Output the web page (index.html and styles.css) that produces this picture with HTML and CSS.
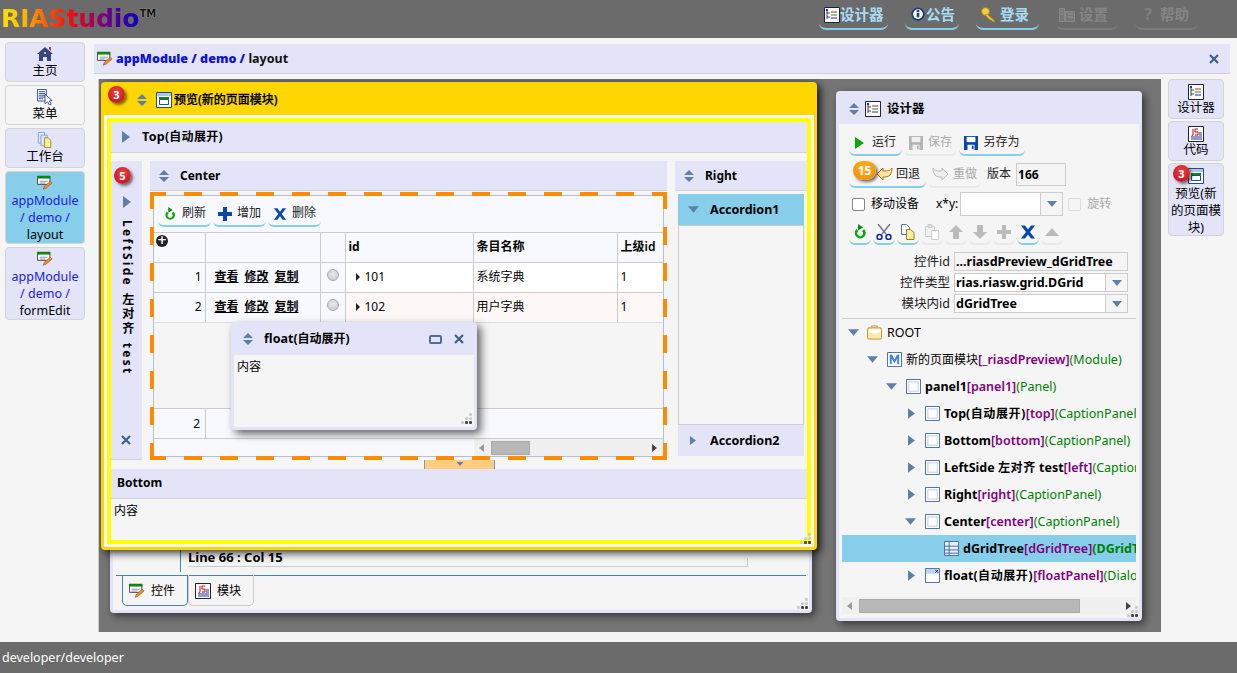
FILE: index.html
```html
<!DOCTYPE html>
<html lang="zh">
<head>
<meta charset="utf-8">
<title>RIAStudio</title>
<link rel="stylesheet" href="styles.css">
</head>
<body>
<svg class="defs" width="0" height="0">
  <defs>
    <symbol id="i-updown" viewBox="0 0 10 12"><path d="M5 0l5 5H0zM5 12L0 7h10z" fill="#5d80a6"/></symbol>
    <symbol id="i-right" viewBox="0 0 8 12"><path d="M0 0l8 6-8 6z" fill="#5d80a6"/></symbol>
    <symbol id="i-down" viewBox="0 0 12 7"><path d="M0 0h12L6 7z" fill="#5d80a6"/></symbol>
    <symbol id="i-close" viewBox="0 0 10 10"><path d="M1 1l8 8M9 1l-8 8" stroke="#3f5f84" stroke-width="2.2" fill="none"/></symbol>
    <symbol id="i-edit" viewBox="0 0 18 16"><path d="M.5.5h14v9H.5z" fill="#fff" stroke="#334"/><path d="M0 0h15v3H0z" fill="#0a8a0a"/><path d="M3 6h9M3 8h6" stroke="#889"/><path d="M7 15l1-3 7-6 2 2-7 6z" fill="#e89020" stroke="#a33" stroke-width=".6"/></symbol>
    <symbol id="i-tree" viewBox="0 0 16 16"><path d="M.5.5h15v15H.5z" fill="#fff" stroke="#223"/><path d="M3 3v9M3 6h3M3 10h3" stroke="#345" fill="none"/><path d="M7 5h6" stroke="#c22"/><path d="M7 8h6" stroke="#282"/><path d="M7 11h6" stroke="#22c"/><path d="M2 2h2v2H2z" fill="#22c"/></symbol>
    <symbol id="i-js" viewBox="0 0 16 16"><path d="M.5.5h15v15H.5z" fill="#fff" stroke="#223"/><path d="M5 3v6l-1.500 1M7 3h3v0M7 3v3h3v3H7" stroke="#d00" fill="none"/><path d="M11 7h3M11 9h3M3 11h11M3 13h11" stroke="#23a"/></symbol>
    <symbol id="i-window" viewBox="0 0 16 16"><path d="M.5.500h15v15H.5z" fill="#fff" stroke="#1c4f8f"/><path d="M1 1h14v3H1z" fill="#a9c7ea"/><path d="M3 5h10v2H3z" fill="#0a8a0a"/><path d="M3.500 7.500h9v5h-9z" fill="#fff" stroke="#1c4f8f"/></symbol>
    <symbol id="i-box" viewBox="0 0 16 16"><path d="M.5.500h15v15H.5z" fill="#fff" stroke="#3e6a9c"/><path d="M3 3h10v10H3z" fill="#fff" stroke="#c6c6e8"/></symbol>
    <symbol id="i-home" viewBox="0 0 16 16"><path d="M8 1L0 8h2v7h4v-4h4v4h4V8h2z" fill="#39457d"/><path d="M12 1h2v4l-2-2z" fill="#a33"/><path d="M7 6h2v2H7z" fill="#b8c0e0"/></symbol>
    <symbol id="i-menu" viewBox="0 0 18 18"><path d="M.5.500h10v13H.5z" fill="#fff" stroke="#24408f"/><path d="M2 3h7M2 5h7M2 7h7M2 9h7M2 11h5" stroke="#24408f"/><path d="M9 6l8 7-3 .5 2 3.500-2 1-2-3.500-3 2z" fill="#fff" stroke="#24408f"/></symbol>
    <symbol id="i-copy" viewBox="0 0 16 18"><path d="M.5.500h7v12h-7z" fill="#dfe8ff" stroke="#7d9bd0"/><path d="M3.500 3.500h7v12h-7z" fill="#dfe8ff" stroke="#7d9bd0"/><path d="M7.500 6.500h4l3 3v8h-7z" fill="#ffee9a" stroke="#a08030"/></symbol>
    <symbol id="i-info" viewBox="0 0 16 18"><circle cx="8" cy="8" r="7.500" fill="#1e3f7a"/><path d="M6 13l2 4 2-4z" fill="#1e3f7a"/><circle cx="8" cy="8" r="5.500" fill="#fff"/><path d="M6.500 3.500h3v2h-3zM6.500 6.500h3v5h-3z" fill="#1e3f7a"/></symbol>
    <symbol id="i-key" viewBox="0 0 16 16"><circle cx="4.500" cy="4.500" r="4" fill="#f0d040" stroke="#a08020"/><path d="M6 7l8 7-1 1-2-1-1-1-1 0-5-5z" fill="#e8c030" stroke="#a08020" stroke-width=".7"/></symbol>
    <symbol id="i-gear" viewBox="0 0 16 14"><path d="M.5.500h5v13h-5zM6.500 3.500h9v10h-9z" fill="#777" stroke="#888"/><path d="M2 3h2M2 6h2M9 6h5M9 9h5" stroke="#999"/></symbol>
    <symbol id="i-play" viewBox="0 0 9 12"><path d="M0 0l9 6-9 6z" fill="#0aa80a"/></symbol>
    <symbol id="i-save" viewBox="0 0 16 16"><path d="M0 0h16v16H0z" fill="#0a48a8"/><path d="M3 1h10v6H3z" fill="#fff"/><path d="M4 10h8v6H4z" fill="#fff"/><path d="M9 11h2v4H9z" fill="#0a48a8"/></symbol>
    <symbol id="i-save-off" viewBox="0 0 16 16"><path d="M0 0h16v16H0z" fill="#b4b4b4"/><path d="M3 1h10v6H3z" fill="#f0f0f0"/><path d="M4 10h8v6H4z" fill="#f0f0f0"/><path d="M9 11h2v4H9z" fill="#b4b4b4"/></symbol>
    <symbol id="i-undo" viewBox="0 0 16 16"><path d="M6 2L0 8l6 6v-3c3 0 5 0 7-2 2-3 2-5 2-7-2 3-4 3-9 3z" fill="#ffe6a0" stroke="#b07820"/></symbol>
    <symbol id="i-redo" viewBox="0 0 16 16"><path d="M10 2l6 6-6 6v-3c-3 0-5 0-7-2C1 6 1 4 1 2c2 3 4 3 9 3z" fill="#eee" stroke="#bbb"/></symbol>
    <symbol id="i-refresh" viewBox="0 0 14 16"><path d="M3.500 5a5.500 5.500 0 1 0 7.500 0l-2 2.300a2.800 2.800 0 1 1-3.700 0z" fill="#0aa80a"/><path d="M5 0v6.500l5-3z" fill="#0a8a0a"/></symbol>
    <symbol id="i-plus" viewBox="0 0 14 14"><path d="M5 0h4v5h5v4H9v5H5V9H0V5h5z" fill="#0a48a8"/></symbol>
    <symbol id="i-plus-off" viewBox="0 0 14 14"><path d="M5 0h4v5h5v4H9v5H5V9H0V5h5z" fill="#bbb"/></symbol>
    <symbol id="i-x" viewBox="0 0 16 13"><path d="M1 0h4l3 4 3-4h4l-5 6.500 5 6.500h-4L8 9l-3 4H1l5-6.500z" fill="#0a48a8"/></symbol>
    <symbol id="i-cut" viewBox="0 0 16 16"><path d="M2 0l8 10M14 0L6 10" stroke="#778" stroke-width="1.500"/><circle cx="3.500" cy="13" r="2.500" fill="none" stroke="#0a2a9a" stroke-width="1.500"/><circle cx="12.500" cy="13" r="2.500" fill="none" stroke="#0a2a9a" stroke-width="1.500"/></symbol>
    <symbol id="i-doc" viewBox="0 0 14 16"><path d="M.5.500h5l3 3v7h-8z" fill="#fff" stroke="#47c"/><path d="M5.500 5.500h4l3.500 3v7H5.500z" fill="#ffee9a" stroke="#a08030"/></symbol>
    <symbol id="i-paste" viewBox="0 0 14 16"><path d="M.5 2.500h9v10h-9z" fill="#f0f0f0" stroke="#ccc"/><path d="M3 .5h4v3H3z" fill="#ddd" stroke="#ccc"/><path d="M6.500 6.500h7v9h-7z" fill="#fff" stroke="#ccc"/></symbol>
    <symbol id="i-up" viewBox="0 0 14 14"><path d="M7 0l7 7H10v7H4V7H0z" fill="#bbb"/></symbol>
    <symbol id="i-dn" viewBox="0 0 14 14"><path d="M7 14l7-7H10V0H4v7H0z" fill="#bbb"/></symbol>
    <symbol id="i-tri" viewBox="0 0 14 8"><path d="M7 0l7 8H0z" fill="#bbb"/></symbol>
    <symbol id="i-folder" viewBox="0 0 16 15"><path d="M5 2V.5h6V2" fill="none" stroke="#c09030"/><rect x=".5" y="2.500" width="15" height="12" rx="1.500" fill="#ffe8a8" stroke="#c09030"/><path d="M2 7l6 2 6-2v-3H2z" fill="#fff"/></symbol>
    <symbol id="i-m" viewBox="0 0 16 16"><path d="M.5.500h15v15H.5z" fill="#fff" stroke="#3e6a9c"/><path d="M3 13V3h2.500L8 8l2.500-5H13v10h-2V7L8 12 5 7v6z" fill="#3f7ff0"/></symbol>
    <symbol id="i-grid" viewBox="0 0 16 16"><path d="M.5.500h15v15H.5z" fill="#eef" stroke="#3e6a9c"/><path d="M1 5.500h14M1 9.500h14M1 13h14M5.500 1v14" stroke="#3e6a9c"/></symbol>
    <symbol id="i-dialog" viewBox="0 0 16 16"><path d="M.5.500h15v15H.5z" fill="#fff" stroke="#3e6a9c"/><path d="M1 1h14v5H1z" fill="#bcd3ee"/><path d="M11 2l3 3M14 2l-3 3" stroke="#224"/></symbol>
    <symbol id="i-grip" viewBox="0 0 12 12"><g fill="#ccc"><rect x="8" y="0" width="3" height="3" rx="1"/><rect x="4" y="4" width="3" height="3" rx="1"/><rect x="8" y="4" width="3" height="3" rx="1"/><rect x="0" y="8" width="3" height="3" rx="1"/></g><g fill="#444"><rect x="4" y="8" width="3" height="3" rx="1"/><rect x="8" y="8" width="3" height="3" rx="1"/></g></symbol>
  </defs>
</svg>

<div class="app">
  <header class="hdr">
    <div class="logo"><span class="logo-text">RIAStudio</span><span class="tm">TM</span></div>
    <nav class="hnav">
      <a class="hbtn w69"><svg class="i16"><use href="#i-tree"/></svg>设计器</a>
      <a class="hbtn w54"><svg class="i16"><use href="#i-info"/></svg>公告</a>
      <a class="hbtn w63 wide"><svg class="i16"><use href="#i-key"/></svg>登录</a>
      <a class="hbtn w62 off"><svg class="i16"><use href="#i-gear"/></svg>设置</a>
      <a class="hbtn w63 off"><span class="qm">?</span>帮助</a>
    </nav>
  </header>

  <div class="mid">
    <aside class="lnav">
      <a class="nbtn h40"><svg class="i16"><use href="#i-home"/></svg><span>主页</span></a>
      <a class="nbtn h40 plain"><svg class="i16"><use href="#i-menu"/></svg><span>菜单</span></a>
      <a class="nbtn h40"><svg class="i16"><use href="#i-copy"/></svg><span>工作台</span></a>
      <a class="nbtn active"><svg class="i16"><use href="#i-edit"/></svg><span class="path"><b>appModule / demo /</b> layout</span></a>
      <a class="nbtn"><svg class="i16"><use href="#i-edit"/></svg><span class="path"><b>appModule / demo /</b> formEdit</span></a>
    </aside>

    <main class="main">
      <div class="crumb">
        <svg class="i16"><use href="#i-edit"/></svg>
        <span class="crumb-text"><b>appModule / demo /</b> layout</span>
        <svg class="i10 crumb-x"><use href="#i-close"/></svg>
      </div>
      <div class="work-row">
        <section class="desktop">
          <div class="win back">
            <div class="editor"><div class="status">Line 66 : Col 15</div></div>
            <div class="tabs">
              <a class="tab on"><svg class="i16"><use href="#i-edit"/></svg>控件</a>
              <a class="tab"><svg class="i16"><use href="#i-js"/></svg>模块</a>
            </div>
            <svg class="grip"><use href="#i-grip"/></svg>
          </div>

          <div class="preview">
            <div class="ptitle">
              <span class="badge red">3</span>
              <svg class="updown"><use href="#i-updown"/></svg>
              <svg class="i16 pw"><use href="#i-window"/></svg>
              <span class="pt">预览(新的页面模块)</span>
            </div>
            <div class="pwhite"><div class="pbody">
              <div class="phead"><svg class="tri-r"><use href="#i-right"/></svg><b class="top">Top<i class="z">(自动展开)</i></b></div>
              <div class="layout">
                <div class="lside">
                  <span class="badge red b5">5</span>
                  <svg class="tri-r"><use href="#i-right"/></svg>
                  <div class="vtext">LeftSide 左对齐 test</div>
                  <svg class="i10 lside-x"><use href="#i-close"/></svg>
                </div>
                <div class="center">
                  <div class="phead"><svg class="updown"><use href="#i-updown"/></svg><b class="gap">Center</b></div>
                  <div class="gridwrap">
                    <div class="gridbox">
                      <div class="gbar">
                        <a class="tb w53"><svg class="i14"><use href="#i-refresh"/></svg>刷新</a>
                        <a class="tb w53"><svg class="i14"><use href="#i-plus"/></svg>增加</a>
                        <a class="tb w53"><svg class="i14"><use href="#i-x"/></svg>删除</a>
                      </div>
                      <table class="tbl">
                        <colgroup><col class="c1"><col class="c2"><col class="c3"><col class="c4"><col class="c5"><col class="c6"></colgroup>
                        <thead><tr>
                          <th class="plus-cell"><span class="plus">+</span></th><th></th><th></th><th>id</th><th>条目名称</th><th>上级id</th>
                        </tr></thead>
                        <tbody>
                          <tr><td class="num">1</td><td class="ops"><u>查看</u><u>修改</u><u>复制</u></td><td class="radio"><i></i></td><td class="d idc"><em></em>101</td><td class="d">系统字典</td><td class="d">1</td></tr>
                          <tr class="alt"><td class="num">2</td><td class="ops"><u>查看</u><u>修改</u><u>复制</u></td><td class="radio"><i></i></td><td class="d idc"><em></em>102</td><td class="d">用户字典</td><td class="d">1</td></tr>
                        </tbody>
                      </table>
                      <div class="gempty"></div>
                      <div class="gsum"><span class="num-s">2</span></div>
                      <div class="gscroll"><span class="sb-l"></span><span class="thumb"></span><span class="sb-r"></span></div>
                    </div>
                    <div class="dash"></div>
                  </div>
                </div>
                <div class="right">
                  <div class="phead"><svg class="updown"><use href="#i-updown"/></svg><b class="gap">Right</b></div>
                  <div class="acc">
                    <div class="acc-h sel"><svg class="tri-d"><use href="#i-down"/></svg><b>Accordion1</b></div>
                    <div class="acc-b"></div>
                    <div class="acc-h"><svg class="tri-r2"><use href="#i-right"/></svg><b>Accordion2</b></div>
                  </div>
                </div>
              </div>
              <div class="split"><div class="split-tab"><svg class="tri-s"><use href="#i-down"/></svg></div></div>
              <div class="phead bot"><b>Bottom</b></div>
              <div class="pcontent">内容</div>
            </div></div>
            <svg class="grip dark"><use href="#i-grip"/></svg>
            <div class="float">
              <div class="ftitle">
                <svg class="updown"><use href="#i-updown"/></svg>
                <b class="ft">float<i class="z">(自动展开)</i></b>
                <span class="maxb"></span>
                <svg class="i10"><use href="#i-close"/></svg>
              </div>
              <div class="fbody">内容</div>
              <svg class="grip"><use href="#i-grip"/></svg>
            </div>
          </div>

          <div class="win designer">
            <div class="dtitle"><svg class="updown"><use href="#i-updown"/></svg><svg class="i16"><use href="#i-tree"/></svg><span>设计器</span></div>
            <div class="dbody">
              <div class="dbar r1">
                <a class="tb w53"><svg class="ic-play"><use href="#i-play"/></svg>运行</a>
                <a class="tb w53 off"><svg class="i14"><use href="#i-save-off"/></svg>保存</a>
                <a class="tb w66"><svg class="i14"><use href="#i-save"/></svg>另存为</a>
              </div>
              <div class="dbar r2">
                <a class="tb w77 undo"><span class="badge orange">15</span><svg class="i16"><use href="#i-undo"/></svg>回退</a>
                <a class="tb w53 off"><svg class="i16"><use href="#i-redo"/></svg>重做</a>
                <label class="ver">版本</label><span class="inp ver-i">166</span>
              </div>
              <div class="dbar r3">
                <span class="cb"></span><span class="lbl-m">移动设备</span>
                <span class="lbl-x">x*y:</span>
                <span class="combo xy"><span class="cv"></span><span class="ca"><svg class="tri-c"><use href="#i-down"/></svg></span></span>
                <span class="cb off"></span><span class="lbl-r">旋转</span>
              </div>
              <div class="dbar r4">
                <a class="ib"><svg class="i16"><use href="#i-refresh"/></svg></a>
                <a class="ib"><svg class="i16"><use href="#i-cut"/></svg></a>
                <a class="ib"><svg class="i16"><use href="#i-doc"/></svg></a>
                <a class="ib off"><svg class="i16"><use href="#i-paste"/></svg></a>
                <a class="ib off"><svg class="i14"><use href="#i-up"/></svg></a>
                <a class="ib off"><svg class="i14"><use href="#i-dn"/></svg></a>
                <a class="ib off"><svg class="i14"><use href="#i-plus-off"/></svg></a>
                <a class="ib"><svg class="i16 x"><use href="#i-x"/></svg></a>
                <a class="ib off"><svg class="i14 t"><use href="#i-tri"/></svg></a>
              </div>
              <div class="form">
                <label>控件id</label><span class="inp fi ro">...riasdPreview_dGridTree</span>
                <label>控件类型</label><span class="combo fi"><span class="cv">rias.riasw.grid.DGrid</span><span class="ca"><svg class="tri-c"><use href="#i-down"/></svg></span></span>
                <label>模块内id</label><span class="combo fi"><span class="cv">dGridTree</span><span class="ca"><svg class="tri-c"><use href="#i-down"/></svg></span></span>
              </div>
              <div class="tree">
                <div class="node l0"><svg class="tri-d"><use href="#i-down"/></svg><svg class="ni"><use href="#i-folder"/></svg><span>ROOT</span></div>
                <div class="node l1"><svg class="tri-d"><use href="#i-down"/></svg><svg class="ni"><use href="#i-m"/></svg><span><i class="z">新的页面模块</i><s>[_riasdPreview]</s><q>(Module)</q></span></div>
                <div class="node l2"><svg class="tri-d"><use href="#i-down"/></svg><svg class="ni"><use href="#i-box"/></svg><span><b>panel1</b><s>[panel1]</s><q>(Panel)</q></span></div>
                <div class="node l3"><svg class="tri-r"><use href="#i-right"/></svg><svg class="ni"><use href="#i-box"/></svg><span><b>Top<i class="z">(自动展开)</i></b><s>[top]</s><q>(CaptionPanel)</q></span></div>
                <div class="node l3"><svg class="tri-r"><use href="#i-right"/></svg><svg class="ni"><use href="#i-box"/></svg><span><b>Bottom</b><s>[bottom]</s><q>(CaptionPanel)</q></span></div>
                <div class="node l3"><svg class="tri-r"><use href="#i-right"/></svg><svg class="ni"><use href="#i-box"/></svg><span><b>LeftSide <i class="z">左对齐</i> test</b><s>[left]</s><q>(CaptionPanel)</q></span></div>
                <div class="node l3"><svg class="tri-r"><use href="#i-right"/></svg><svg class="ni"><use href="#i-box"/></svg><span><b>Right</b><s>[right]</s><q>(CaptionPanel)</q></span></div>
                <div class="node l3"><svg class="tri-d"><use href="#i-down"/></svg><svg class="ni"><use href="#i-box"/></svg><span><b>Center</b><s>[center]</s><q>(CaptionPanel)</q></span></div>
                <div class="node l4 sel"><svg class="ni"><use href="#i-grid"/></svg><span><b>dGridTree</b><s>[dGridTree]</s><q>(DGridTree)</q></span></div>
                <div class="node l3"><svg class="tri-r"><use href="#i-right"/></svg><svg class="ni"><use href="#i-dialog"/></svg><span><b>float<i class="z">(自动展开)</i></b><s>[floatPanel]</s><q>(DialogPanel)</q></span></div>
              </div>
              <div class="tscroll"><span class="sb-l"></span><span class="thumb"></span><span class="sb-r"></span></div>
            </div>
            <svg class="grip"><use href="#i-grip"/></svg>
          </div>
        </section>

        <aside class="rnav">
          <a class="rbtn h40"><svg class="i16"><use href="#i-tree"/></svg><span>设计器</span></a>
          <a class="rbtn h40"><svg class="i16"><use href="#i-js"/></svg><span>代码</span></a>
          <a class="rbtn prev"><span class="badge red b3">3</span><svg class="i16"><use href="#i-window"/></svg><span>预览(新的页面模块)</span></a>
        </aside>
      </div>
    </main>
  </div>

  <footer class="ftr">developer/developer</footer>
</div>
</body>
</html>
```

FILE: styles.css
```css
* { box-sizing: border-box; }
html, body { margin: 0; height: 100%; }
body { overflow: hidden; font: 12px/1.2 "Noto Sans", "Noto Sans CJK SC", sans-serif; color: #000; background: #f5f5f5; }
a { color: inherit; text-decoration: none; }
svg { display: block; flex: none; }
.defs { position: absolute; }
.i16 { width: 16px; height: 16px; }
.i14 { width: 14px; height: 14px; }
.i10 { width: 10px; height: 10px; }
.z { font-size: 12px; font-style: normal; }
.app { width: 1237px; height: 673px; display: flex; flex-direction: column; }

/* header */
.hdr { height: 38px; flex: none; background: #6b6b6b; display: flex; align-items: flex-start; padding: 0 39px 0 1px; }
.logo { display: flex; align-items: flex-start; padding-top: 4px; }
.logo-text { font: bold 25px/29px "DejaVu Sans", sans-serif; letter-spacing: -.1px; color: transparent; -webkit-background-clip: text; background-clip: text; background-image: linear-gradient(90deg, #ffe000 0, #ffc000 15%, #ff6000 32%, #ff1000 48%, #c00040 62%, #800080 74%, #4000a0 86%, #1000c0 100%); }
.tm { font: bold 10px/12px "DejaVu Sans", sans-serif; color: #111; text-shadow: 0 0 1px #ddd; margin-top: 4px; }
.hnav { margin-left: auto; display: flex; gap: 17px; margin-top: 4px; }
.hbtn { height: 26px; display: flex; align-items: center; gap: 0; padding: 0 0 3px 5px; font-size: 14.5px; font-weight: 700; color: #a6dcf4; border-bottom: 2px solid #87ceeb; border-radius: 0 0 7px 7px; }
.hbtn.wide .i16 { margin-right: 3px; }
.hbtn.off { color: #858585; border-bottom-color: #7c7c7c; padding-left: 3px; }
.hbtn.off .i16 { margin-right: 4px; }
.w69 { width: 69px; } .w54 { width: 54px; } .w63 { width: 63px; } .w62 { width: 62px; }
.qm { width: 16px; margin: 0 4px 0 2px; text-align: center; font-size: 16px; color: #7f7f7f; }

/* mid */
.mid { flex: 1; display: flex; min-height: 0; background: #f5f5f5; }
.lnav { width: 94px; flex: none; padding: 4px 9px 0 5px; display: flex; flex-direction: column; gap: 3px; }
.nbtn, .rbtn { display: flex; flex-direction: column; align-items: center; text-align: center; border: 1px solid #d4d4d8; border-radius: 4px; background: #e4e4f8; font-size: 12.5px; line-height: 17px; padding-top: 3px; position: relative; }
.h40 { height: 40px; }
.plain { background: #f5f5f5; }
.nbtn .path { padding: 1px 2px 0; }
.nbtn .path b { font-weight: 400; color: #2020e0; }
.nbtn.active { background: #87ceeb; }

.main { flex: 1; min-width: 0; display: flex; flex-direction: column; }
.crumb { margin: 6px 7px 0 0; height: 30px; flex: none; background: #e4e4f8; border-bottom: 1px solid #d0d0d8; display: flex; align-items: center; padding: 0 11px 0 3px; gap: 3px; font-size: 12.5px; }
.crumb-text { color: #111; font-weight: 700; }
.crumb-text b { color: #1010d8; }
.crumb-x { margin-left: auto; }
.work-row { flex: 1; display: flex; margin: 5px 0 10px 4px; gap: 7px; min-height: 0; }
.desktop { width: 1063px; flex: none; position: relative; background: #757575; border-left: 1px solid #c8c8c8; overflow: hidden; }
.rnav { width: 56px; flex: none; display: flex; flex-direction: column; gap: 2px; }
.rbtn { padding-top: 3px; line-height: 17px; }
.rbtn .i16 { margin-top: 1px; margin-bottom: -1px; }
.rbtn.prev { height: 73px; padding: 3px 2px 0; }
.rbtn.prev .i16 { margin-bottom: 1px; }
.b3 { left: 4px; top: 1px; }

/* windows */
.win { position: absolute; background: #e4e4f8; border-radius: 4px; box-shadow: 3px 3px 8px rgba(0,0,0,.55); }
.grip { position: absolute; right: 3px; bottom: 3px; width: 12px; height: 12px; }
.back { left: 11px; top: 6px; width: 702px; height: 528px; padding: 3px; display: flex; flex-direction: column; }
.editor { flex: 1; background: #f5f5f5; padding: 0 0 0 67px; display: flex; flex-direction: column; justify-content: flex-end; }
.status { margin: 0 61px 3px 0; padding-left: 7px; height: 22px; border-left: 1px solid #4682b4; font-weight: 700; font-size: 13px; line-height: 15px; position: relative; }
.status::after { content: ""; position: absolute; left: 7px; right: 0; bottom: 5px; height: 8px; border-bottom: 1px solid #ccc; border-right: 1px solid #ccc; }
.tabs { flex: none; height: 35px; background: #f5f5f5; padding-left: 9px; display: flex; position: relative; }
.tabs::before { content: ""; position: absolute; left: 3px; right: 3px; top: 0; border-top: 1px solid #4682b4; }
.tab { width: 66px; height: 31px; display: flex; align-items: center; gap: 6px; padding: 2px 0 0 6px; border: 1px solid #ccc; border-top: 0; border-radius: 0 0 5px 5px; position: relative; }
.tab.on { border-color: #4682b4; }

/* preview */
.preview { position: absolute; left: 2px; top: 3px; width: 716px; height: 468px; background: #ffd700; border-radius: 4px; padding: 0 3px 3px; box-shadow: 3px 3px 8px rgba(0,0,0,.8); display: flex; flex-direction: column; }
.ptitle { height: 33px; flex: none; display: flex; align-items: center; padding: 3px 0 0 33px; position: relative; }
.pw { margin-left: 9px; margin-right: 2px; }
.pt { font-weight: 500; -webkit-text-stroke: .25px #000; }
.updown { width: 10px; height: 12px; }
.badge { position: absolute; display: flex; align-items: center; justify-content: center; color: #fff; font: bold 11px/1 "Noto Sans", sans-serif; box-shadow: 2px 2px 3px rgba(0,0,0,.55); z-index: 2; }
.badge.red { width: 17px; height: 17px; border-radius: 50%; background: radial-gradient(circle at 50% 35%, #f04040, #b80c1c); }
.ptitle .badge { left: 4px; top: 4px; }
.pwhite { flex: 1; min-height: 0; background: #f5f5f5; padding: 3px; }
.pbody { height: 100%; border: 4px solid #ff0; background: #f5f5f5; display: flex; flex-direction: column; }
.phead { height: 31px; flex: none; background: #e4e4f8; border-bottom: 1px solid #d4d4d8; display: flex; align-items: center; padding-left: 6px; }
.phead b { font-weight: 700; }
.phead .top { font-size: 12.5px; letter-spacing: .3px; }
.tri-r { width: 8px; height: 12px; flex: none; }
.pbody > .phead:first-child .tri-r { margin-right: 12px; margin-left: 5px; }
.layout { display: flex; gap: 8px; height: 299px; margin-top: 8px; flex: none; }
.lside { width: 31px; flex: none; background: #e4e4f8; border-bottom: 1px solid #d4d4d8; display: flex; flex-direction: column; align-items: center; position: relative; padding-top: 35px; }
.badge.b5 { left: 3px; top: 6px; }
.vtext { writing-mode: vertical-rl; font-weight: 700; letter-spacing: 2.3px; word-spacing: 1px; margin-top: 12px; white-space: nowrap; }
.lside-x { position: absolute; left: 10px; bottom: 14px; }
.center { width: 517px; flex: none; display: flex; flex-direction: column; }
.center .phead, .right .phead { height: 30px; padding: 1px 0 0 9px; }
.gap { margin-left: 11px; }
.gridwrap { flex: 1; min-height: 0; position: relative; padding: 3px; margin-top: 1px; }
.gridbox { height: 100%; border: 1px solid #b4bce0; background: #f8f9ff; display: flex; flex-direction: column; }
.dash { position: absolute; inset: 0; pointer-events: none;
  background:
    repeating-linear-gradient(90deg, #ff8c00 0 16px, transparent 16px 34px, #ff8c00 34px 36px) left top / 100% 4px no-repeat,
    repeating-linear-gradient(90deg, #ff8c00 0 16px, transparent 16px 34px, #ff8c00 34px 36px) left bottom / 100% 4px no-repeat,
    repeating-linear-gradient(180deg, #ff8c00 0 17px, transparent 17px 35px, #ff8c00 35px 36px) left top / 4px 100% no-repeat,
    repeating-linear-gradient(180deg, #ff8c00 0 17px, transparent 17px 35px, #ff8c00 35px 36px) right top / 4px 100% no-repeat; }
.gbar { height: 36px; flex: none; display: flex; gap: 2px; padding: 3px 0 0 4px; }
.tb { height: 28px; display: inline-flex; align-items: center; justify-content: center; gap: 5px; border-bottom: 2px solid #87ceeb; border-radius: 0 0 6px 6px; position: relative; color: #222; padding-top: 1px; }
.gbar .tb { padding-top: 3px; }
.tb.off { color: #aaa; border-bottom-color: #e8e8e8; }
.w53 { width: 53px; } .w66 { width: 66px; } .w77 { width: 77px; }
.tbl { border-collapse: collapse; table-layout: fixed; width: 509px; flex: none; }
.c1 { width: 51px; } .c2 { width: 115px; } .c3 { width: 25px; } .c4 { width: 128px; } .c5 { width: 144px; } .c6 { width: 46px; }
.tbl th, .tbl td { border: 1px solid #ccc; border-left: 0; height: 30px; padding: 0 0 0 3px; text-align: left; font-weight: 400; }
.tbl th { font-weight: 700; }
.tbl th:nth-child(n+5) { font-weight: 600; }
.tbl tr > :last-child { border-right: 0; }
.plus-cell { vertical-align: top; position: relative; }
.plus { position: absolute; left: 2px; top: 2px; width: 12px; height: 12px; border-radius: 50%; background: #222; color: #fff; font: bold 12px/11px "DejaVu Sans", sans-serif; text-align: center; }
.num { text-align: right !important; padding-right: 3px !important; }
.ops { padding-left: 9px !important; }
.ops u { margin-right: 6px; font-weight: 600; }
.radio { padding: 0 !important; }
.radio i { display: block; width: 12px; height: 12px; margin: -5px 0 0 6px; border-radius: 50%; background: radial-gradient(circle at 50% 40%, #e8e8e8, #c8c8c8); border: 1px solid #aaa; }
.d { background: #fff; }
.alt .d { background: #fdf8f7; }
.idc { padding-left: 10px !important; }
.idc em { display: inline-block; width: 0; height: 0; border: 4px solid transparent; border-left: 4px solid #222; border-right: 0; margin-right: 5px; }
.gempty { flex: 1; background: #f5f5f5; margin-top: -1px; border-top: 1px solid #ddd; }
.gsum { height: 31px; flex: none; border-top: 1px solid #ccc; border-bottom: 1px solid #ccc; display: flex; align-items: center; }
.num-s { flex: none; width: 52px; height: 100%; padding-right: 5px; text-align: right; line-height: 29px; border-right: 1px solid #ccc; }
.gscroll, .tscroll { display: flex; align-items: center; background: #f0f0f0; }
.gscroll { height: 17px; flex: none; margin-left: 320px; padding: 0 6px 0 5px; }
.sb-l, .sb-r { width: 0; height: 0; border: 4px solid transparent; flex: none; }
.sb-l { border-right: 5px solid #999; border-left: 0; }
.sb-r { border-left: 5px solid #444; border-right: 0; margin-left: auto; }
.thumb { height: 14px; background: #b8b8b8; border: 1px solid #aaa; display: block; }
.gscroll .thumb { width: 39px; margin-left: 7px; }
.right { flex: none; width: 132px; display: flex; flex-direction: column; }
.acc { padding: 3px 3px 0; display: flex; flex-direction: column; }
.acc-h { height: 31px; flex: none; background: #e4e4f8; display: flex; align-items: center; padding-left: 12px; font-size: 12.5px; }
.acc-h.sel { background: #87ceeb; padding-left: 10px; }
.acc-h b { margin-left: 10px; }
.acc-h.sel b { margin-left: 11px; }
.tri-d { width: 11px; height: 7px; flex: none; }
.tri-r2 { width: 6px; height: 11px; margin-right: 4px; }
.acc-b { height: 200px; border: 1px solid #ccc; background: #f5f5f5; flex: none; }
.split { height: 9px; flex: none; padding-left: 313px; }
.split-tab { width: 71px; height: 9px; background: #ffcc80; border: 1px solid #6f9cc0; border-width: 0 1px; display: flex; justify-content: center; }
.tri-s { width: 8px; height: 4px; margin-top: 2px; }
.phead.bot { height: 30px; }
.pcontent { flex: 1; padding: 5px 3px; }
.grip.dark { right: 5px; bottom: 5px; }

/* float */
.float { position: absolute; left: 130px; top: 240px; width: 246px; height: 108px; background: #e4e4f8; border-radius: 4px; padding: 0 3px 3px; box-shadow: 4px 4px 8px rgba(0,0,0,.6); z-index: 3; display: flex; flex-direction: column; }
.ftitle { height: 33px; flex: none; display: flex; align-items: center; padding: 1px 10px 0 9px; font-size: 12.5px; }
.ft { margin-left: 11px; }
.maxb { width: 13px; height: 9px; border: 2px solid #4d6f94; border-radius: 2px; margin-left: auto; margin-right: 12px; }
.fbody { flex: 1; background: #f5f5f5; padding: 5px 3px; }
.float .grip { right: 4px; bottom: 5px; }

/* designer */
.designer { left: 737px; top: 12px; width: 306px; height: 530px; padding: 0 3px 3px; display: flex; flex-direction: column; background: #e4e4f8; }
.dtitle { height: 33px; flex: none; display: flex; align-items: center; gap: 6px; padding: 2px 0 0 10px; font-weight: 700; font-size: 12.5px; }
.dbody { flex: 1; min-height: 0; background: #f5f5f5; padding: 0 3px; display: flex; flex-direction: column; }
.dbar { display: flex; align-items: center; flex: none; }
.r1 { padding: 6px 0 0 7px; gap: 2px; }
.r1 .tb { height: 26px; }
.ic-play { width: 9px; height: 12px; margin-right: 3px; }
.r2 { padding: 5px 0 0 7px; gap: 2px; }
.r2 .tb { height: 27px; }
.undo { padding-left: 22px; gap: 3px; }
.badge.orange { left: 4px; top: 0; width: 23px; height: 19px; border-radius: 10px; background: radial-gradient(circle at 50% 30%, #ffb020, #f08800); font-size: 12px; }
.ver { margin-left: 4px; margin-right: 3px; color: #222; }
.inp { background: #f5f5f5; border: 1px solid #ccc; font-weight: 700; padding-left: 1px; display: block; }
.ver-i { width: 50px; height: 23px; line-height: 21px; }
.r3 { padding: 4px 0 0 10px; height: 28px; }
.cb { width: 13px; height: 13px; border: 1px solid #888; border-radius: 2px; background: #fff; flex: none; }
.cb.off { border-color: #ddd; background: #f5f5f5; margin-left: 5px; }
.lbl-m { margin-left: 6px; }
.lbl-x { margin-left: 17px; margin-right: 2px; }
.lbl-r { margin-left: 6px; color: #aaa; }
.combo { display: flex; background: #fff; border: 1px solid #ccc; font-weight: 700; }
.combo.xy { width: 103px; height: 24px; }
.cv { flex: 1; padding-left: 1px; white-space: nowrap; }
.ca { width: 22px; border-left: 1px solid #ccc; background: #f5f5f5; display: flex; align-items: center; justify-content: center; flex: none; }
.tri-c { width: 10px; height: 6px; }
.r4 { padding: 5px 0 0 7px; gap: 2px; }
.ib { width: 22px; height: 24px; display: flex; justify-content: center; align-items: center; border-bottom: 2px solid #87ceeb; border-radius: 0 0 6px 6px; }
.ib.off { border-bottom-color: #e8e8e8; }
.ib .x { height: 14px; }
.ib .t { height: 8px; }
.form { display: grid; grid-template-columns: 108px 174px; column-gap: 4px; row-gap: 2px; align-items: center; margin: 7px 0 0; padding-bottom: 5px; border-bottom: 1px solid #ccc; font-size: 12.5px; }
.form label { text-align: right; color: #222; }
.fi { height: 19px; line-height: 17px; white-space: nowrap; }
.tree { flex: 1; min-height: 0; overflow: hidden; font-size: 12.5px; }
.node { height: 27px; display: flex; align-items: center; white-space: nowrap; overflow: hidden; position: relative; }
.ni { width: 15px; height: 15px; flex: none; position: absolute; }
.node > span { position: absolute; }
.node .tri-d, .node .tri-r { position: absolute; }
.node .tri-r { width: 7px; height: 11px; }
.l0 .tri-d { left: 6px; } .l0 .ni { left: 25px; } .l0 > span { left: 45px; }
.l1 .tri-d { left: 25px; } .l1 .ni { left: 45px; } .l1 > span { left: 64px; }
.l2 .tri-d { left: 44px; } .l2 .ni { left: 64px; } .l2 > span { left: 83px; }
.l3 .tri-r { left: 66px; } .l3 .tri-d { left: 63px; } .l3 .ni { left: 83px; } .l3 > span { left: 102px; }
.l4 .ni { left: 102px; } .l4 > span { left: 121px; }
.node b { font-weight: 700; }
.node b .z { letter-spacing: .6px; }
.node s { text-decoration: none; color: #800080; font-weight: 600; }
.node q { quotes: none; color: #008000; }
.node.sel { background: #87ceeb; }
.node.sel q { font-weight: 700; }
.tscroll { height: 17px; flex: none; margin-bottom: 4px; padding: 0 5px; }
.tscroll .thumb { width: 221px; margin-left: 7px; }

/* footer */
.ftr { height: 31px; flex: none; background: #6b6b6b; color: #fff; padding: 8px 2px 0; font-size: 12.5px; }
```
